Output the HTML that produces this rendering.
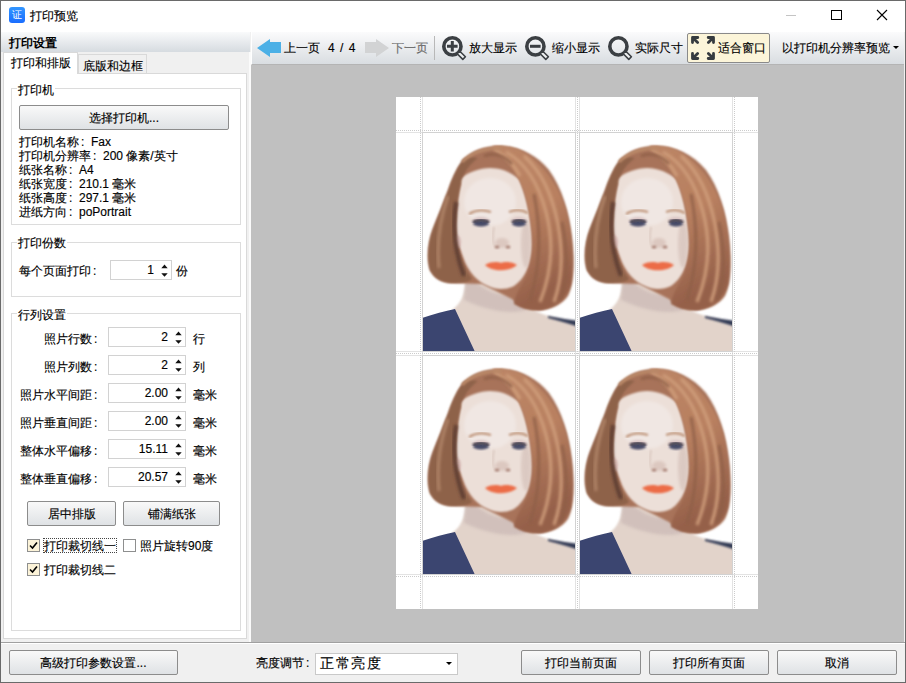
<!DOCTYPE html>
<html><head><meta charset="utf-8">
<style>
*{box-sizing:border-box;margin:0;padding:0}
html,body{width:906px;height:683px;overflow:hidden;background:#f0f0f0}
body{position:relative;font-family:"Liberation Sans",sans-serif;font-size:12px;color:#000;-webkit-text-stroke:0.15px #000}
.a{position:absolute}
.t{position:absolute;line-height:12px;white-space:nowrap}
.btn{position:absolute;border:1px solid #8c8c8c;border-radius:2px;background:linear-gradient(#f9f9f9,#dfe2e5);text-align:center;line-height:25px}
.grp{position:absolute;border:1px solid #dcdcdc}
.leg{position:absolute;background:#fff;padding:0 1px;line-height:12px}
.spin{position:absolute;border:1px solid #d2d2d2;background:#fff;height:20px}
.spin .v{position:absolute;right:17px;top:3px;line-height:12px;color:#000}
.spin .ar{position:absolute;right:3px;top:3px;width:7px;height:13px}
i.c{font-style:normal;display:inline-block;width:12px;padding-left:2px}
.cb{position:absolute;width:13px;height:13px;border:1px solid #8e8f8f;background:#fff}
.cb.on{background:#fcf3d8}
</style></head><body>
<!-- window frame -->
<div class="a" style="left:0;top:0;width:906px;height:683px;border:1px solid #6a6a6a;z-index:50;pointer-events:none"></div>
<!-- title bar -->
<div class="a" style="left:1px;top:1px;width:904px;height:31px;background:#fff"></div>
<div class="a" style="left:9px;top:7px;width:16px;height:16px;border-radius:3px;background:linear-gradient(#3296ff,#1a6dff)"></div>
<div class="t" style="left:12px;top:10px;font-size:10px;line-height:10px;color:#fff;-webkit-text-stroke:0">证</div>
<div class="t" style="left:30px;top:10px">打印预览</div>
<div class="a" style="left:786px;top:15px;width:10px;height:1px;background:#c4c4c4"></div>
<div class="a" style="left:831px;top:10px;width:11px;height:10px;border:1px solid #000"></div>
<svg class="a" style="left:876px;top:9px" width="12" height="12" viewBox="0 0 12 12"><path d="M1 1L11 11M11 1L1 11" stroke="#000" stroke-width="1.1"/></svg>

<!-- left panel header -->
<div class="a" style="left:1px;top:32px;width:249px;height:20px;background:linear-gradient(#f9fafb,#d6dbe0)"></div>
<div class="t" style="left:9px;top:37px;font-weight:bold;-webkit-text-stroke:0">打印设置</div>

<!-- tabs -->
<div class="a" style="left:78px;top:54px;width:69px;height:20px;background:#f0f0f0;border:1px solid #d9d9d9;border-bottom:none"></div>
<div class="t" style="left:83px;top:60px">底版和边框</div>
<div class="a" style="left:3px;top:73px;width:244px;height:566px;background:#fff;border:1px solid #d9d9d9"></div>
<div class="a" style="left:3px;top:52px;width:75px;height:22px;background:#fff;border:1px solid #d9d9d9;border-bottom:none"></div>
<div class="t" style="left:11px;top:57px">打印和排版</div>

<!-- group 1 -->
<div class="grp" style="left:11px;top:88px;width:230px;height:137px"></div>
<div class="leg t" style="left:17px;top:84px">打印机</div>
<div class="btn" style="left:19px;top:105px;width:210px;height:25px">选择打印机...</div>
<div class="t" style="left:19px;top:135px;line-height:14px">打印机名称<i class="c">:</i>Fax<br>打印机分辨率<i class="c">:</i>200 像素/英寸<br>纸张名称<i class="c">:</i>A4<br>纸张宽度<i class="c">:</i>210.1 毫米<br>纸张高度<i class="c">:</i>297.1 毫米<br>进纸方向<i class="c">:</i>poPortrait</div>

<!-- group 2 -->
<div class="grp" style="left:11px;top:242px;width:230px;height:55px"></div>
<div class="leg t" style="left:17px;top:237px">打印份数</div>
<div class="t" style="left:19px;top:265px">每个页面打印<i class="c">:</i></div>
<div class="spin" style="left:110px;top:260px;width:62px"><span class="v">1</span><svg class="ar" viewBox="0 0 7 13"><path d="M0.3 4.2L3.5 0.6L6.7 4.2ZM0.3 9.2L3.5 12.8L6.7 9.2Z" fill="#111"/></svg></div>
<div class="t" style="left:176px;top:265px">份</div>

<!-- group 3 -->
<div class="grp" style="left:11px;top:313px;width:230px;height:318px"></div>
<div class="leg t" style="left:17px;top:309px">行列设置</div>

<div class="t" style="left:44px;top:333px">照片行数<i class="c">:</i></div>
<div class="spin" style="left:108px;top:327px;width:78px"><span class="v">2</span><svg class="ar" viewBox="0 0 7 13"><path d="M0.3 4.2L3.5 0.6L6.7 4.2ZM0.3 9.2L3.5 12.8L6.7 9.2Z" fill="#111"/></svg></div>
<div class="t" style="left:193px;top:333px">行</div>

<div class="t" style="left:44px;top:361px">照片列数<i class="c">:</i></div>
<div class="spin" style="left:108px;top:355px;width:78px"><span class="v">2</span><svg class="ar" viewBox="0 0 7 13"><path d="M0.3 4.2L3.5 0.6L6.7 4.2ZM0.3 9.2L3.5 12.8L6.7 9.2Z" fill="#111"/></svg></div>
<div class="t" style="left:193px;top:361px">列</div>

<div class="t" style="left:20px;top:389px">照片水平间距<i class="c">:</i></div>
<div class="spin" style="left:108px;top:383px;width:78px"><span class="v">2.00</span><svg class="ar" viewBox="0 0 7 13"><path d="M0.3 4.2L3.5 0.6L6.7 4.2ZM0.3 9.2L3.5 12.8L6.7 9.2Z" fill="#111"/></svg></div>
<div class="t" style="left:193px;top:389px">毫米</div>

<div class="t" style="left:20px;top:417px">照片垂直间距<i class="c">:</i></div>
<div class="spin" style="left:108px;top:411px;width:78px"><span class="v">2.00</span><svg class="ar" viewBox="0 0 7 13"><path d="M0.3 4.2L3.5 0.6L6.7 4.2ZM0.3 9.2L3.5 12.8L6.7 9.2Z" fill="#111"/></svg></div>
<div class="t" style="left:193px;top:417px">毫米</div>

<div class="t" style="left:20px;top:445px">整体水平偏移<i class="c">:</i></div>
<div class="spin" style="left:108px;top:439px;width:78px"><span class="v">15.11</span><svg class="ar" viewBox="0 0 7 13"><path d="M0.3 4.2L3.5 0.6L6.7 4.2ZM0.3 9.2L3.5 12.8L6.7 9.2Z" fill="#111"/></svg></div>
<div class="t" style="left:193px;top:445px">毫米</div>

<div class="t" style="left:20px;top:473px">整体垂直偏移<i class="c">:</i></div>
<div class="spin" style="left:108px;top:467px;width:78px"><span class="v">20.57</span><svg class="ar" viewBox="0 0 7 13"><path d="M0.3 4.2L3.5 0.6L6.7 4.2ZM0.3 9.2L3.5 12.8L6.7 9.2Z" fill="#111"/></svg></div>
<div class="t" style="left:193px;top:473px">毫米</div>

<div class="btn" style="left:27px;top:501px;width:89px;height:25px">居中排版</div>
<div class="btn" style="left:123px;top:501px;width:97px;height:25px">铺满纸张</div>

<div class="cb on" style="left:27px;top:539px"></div>
<svg class="a" style="left:29px;top:541px" width="9" height="9" viewBox="0 0 9 9"><path d="M1 4.5L3.5 7L8 1.5" stroke="#000" stroke-width="1.6" fill="none"/></svg>
<div class="a" style="left:43px;top:538px;width:74px;height:15px;border:1px dotted #444"></div>
<div class="t" style="left:44px;top:540px">打印裁切线一</div>
<div class="cb" style="left:123px;top:539px"></div>
<div class="t" style="left:140px;top:540px">照片旋转90度</div>
<div class="cb on" style="left:27px;top:563px"></div>
<svg class="a" style="left:29px;top:565px" width="9" height="9" viewBox="0 0 9 9"><path d="M1 4.5L3.5 7L8 1.5" stroke="#000" stroke-width="1.6" fill="none"/></svg>
<div class="t" style="left:44px;top:564px">打印裁切线二</div>

<!-- toolbar -->
<div class="a" style="left:251px;top:32px;width:653px;height:33px;background:linear-gradient(#fbfbfc,#d9dde1);border-left:1px solid #fff;border-bottom:1px solid #b4b4b4"></div>
<svg class="a" style="left:257px;top:39px" width="24" height="18" viewBox="0 0 24 18"><path d="M0 9L13 0V3H24V14H13V18Z" fill="#4cb0e6"/></svg>
<div class="t" style="left:284px;top:42px">上一页</div>
<div class="t" style="left:328px;top:42px;word-spacing:1px;letter-spacing:0.5px">4 / 4</div>
<svg class="a" style="left:365px;top:39px" width="24" height="18" viewBox="0 0 24 18"><path d="M24 9L11 0V3H0V14H11V18Z" fill="#d2d3d4"/></svg>
<div class="t" style="left:392px;top:42px;color:#8a8a8a">下一页</div>
<div class="a" style="left:434px;top:36px;width:1px;height:24px;background:#b8b8b8"></div>

<svg class="a" style="left:441px;top:35px" width="26" height="26" viewBox="0 0 26 26"><circle cx="11.4" cy="11.4" r="8.6" stroke="#3b3f43" stroke-width="3.6" fill="none"/><path d="M18.8 16.2L24.4 21.8L21.8 24.4L16.2 18.8Z" stroke="#3b3f43" stroke-width="1.6" stroke-linejoin="round" fill="#eef0f1"/><path d="M6 11.3H16.6M11.3 6V16.6" stroke="#3b3f43" stroke-width="3"/></svg>
<div class="t" style="left:469px;top:42px">放大显示</div>
<svg class="a" style="left:524px;top:35px" width="26" height="26" viewBox="0 0 26 26"><circle cx="11.4" cy="11.4" r="8.6" stroke="#3b3f43" stroke-width="3.6" fill="none"/><path d="M18.8 16.2L24.4 21.8L21.8 24.4L16.2 18.8Z" stroke="#3b3f43" stroke-width="1.6" stroke-linejoin="round" fill="#eef0f1"/><path d="M6 11.3H16.6" stroke="#3b3f43" stroke-width="3"/></svg>
<div class="t" style="left:552px;top:42px">缩小显示</div>
<svg class="a" style="left:607px;top:35px" width="26" height="26" viewBox="0 0 26 26"><circle cx="11.4" cy="11.4" r="8.6" stroke="#3b3f43" stroke-width="3.6" fill="none"/><path d="M18.8 16.2L24.4 21.8L21.8 24.4L16.2 18.8Z" stroke="#3b3f43" stroke-width="1.6" stroke-linejoin="round" fill="#eef0f1"/></svg>
<div class="t" style="left:635px;top:42px">实际尺寸</div>

<div class="a" style="left:687px;top:33px;width:83px;height:30px;background:#fcf5d9;border:1px solid #8a8a8a;border-radius:2px"></div>
<svg class="a" style="left:691px;top:36px" width="24" height="24" viewBox="0 0 24 24"><g stroke="#363b3f" stroke-width="2.8" stroke-linecap="round" stroke-linejoin="round" fill="none"><path d="M1.5 6.6V1.5H6.8M1.8 1.8L6.6 6.6"/><path d="M17.2 1.5H22.5V6.6M22.2 1.8L17.4 6.6"/><path d="M1.5 17.4V22.5H6.8M1.8 22.2L6.6 17.4"/><path d="M17.2 22.5H22.5V17.4M22.2 22.2L17.4 17.4"/></g></svg>
<div class="t" style="left:718px;top:42px">适合窗口</div>
<div class="t" style="left:782px;top:42px">以打印机分辨率预览</div>
<svg class="a" style="left:893px;top:46px" width="6" height="4" viewBox="0 0 6 4"><path d="M0 0H6L3 3Z" fill="#000"/></svg>

<!-- preview area -->
<div class="a" style="left:249px;top:52px;width:2px;height:590px;background:#fbfbfb"></div>
<div class="a" style="left:251px;top:65px;width:653px;height:577px;background:#c0c0c0"></div>
<div class="a" style="left:904px;top:32px;width:1px;height:610px;background:#f0f0f0"></div>
<div class="a" style="left:396px;top:97px;width:362px;height:512px;background:#fff"></div>

<svg class="a" style="left:396px;top:97px" width="362" height="512" viewBox="0 0 362 512">
<defs>
<filter id="bl" x="-20%" y="-20%" width="140%" height="140%"><feGaussianBlur stdDeviation="1.6"/></filter>
<filter id="bl2" x="-20%" y="-20%" width="140%" height="140%"><feGaussianBlur stdDeviation="0.8"/></filter>
<linearGradient id="hg" x1="0" y1="0" x2="0.3" y2="1"><stop offset="0" stop-color="#bb8566"/><stop offset="0.5" stop-color="#b98060"/><stop offset="1" stop-color="#95604a"/></linearGradient>
<clipPath id="pc"><rect x="0" y="0" width="154" height="220"/></clipPath>
<g id="ph" clip-path="url(#pc)">
<rect x="0" y="0" width="154" height="220" fill="#fff"/>
<!-- neck/chest -->
<path d="M44 134C45 155 42 170 30 178L52 221H156V191C140 188 128 185 118 181C108 178 102 165 100 146Z" fill="#e2d3ca" filter="url(#bl2)"/>
<path d="M44 140C60 160 84 170 102 158L104 178C84 184 60 176 42 168Z" fill="#cdbcb8" opacity=".8" filter="url(#bl)"/>
<!-- shirt -->
<path d="M-3 187C10 183 22 179 33 177L54 222H-3Z" fill="#3b4570"/>
<path d="M126 184C138 186 148 188 157 189V195C148 192 138 189 126 186Z" fill="#333a55" filter="url(#bl2)"/>
<!-- hair silhouette -->
<path d="M76 14C96 14 114 22 127 38C140 56 147 80 150 105C153 130 152 152 146 164C139 174 126 179 113 178C103 177 96 173 90 167L60 152L30 151C20 151 12 146 8 138C4 126 6 110 11 97C16 84 22 70 27 56C31 44 36 34 42 27C50 19 62 14 76 14Z" fill="#a8735a" filter="url(#bl2)"/>
<!-- face -->
<path d="M38 47C46 40 58 36 68 36C80 36 90 41 97 47C104 62 110 90 110 112C110 130 104 146 92 154C84 158 74 158 66 154C56 150 46 140 41 125C36 112 33 102 34 90C34 75 36 62 39 52Z" fill="#ecdfd8" filter="url(#bl2)"/>
<ellipse cx="35" cy="110" rx="4" ry="7" fill="#d8bab6" filter="url(#bl2)"/>
<ellipse cx="68" cy="70" rx="26" ry="24" fill="#f0e7e3" filter="url(#bl)"/>
<ellipse cx="104" cy="112" rx="5" ry="24" fill="#c4aaa2" opacity=".4" filter="url(#bl)"/>
<!-- left hair -->
<path d="M42 27C36 34 31 44 27 56C22 70 16 84 11 97C6 110 5 126 8 138C12 146 20 151 30 151C40 151 47 150 50 147C42 136 37 122 34 108C33 92 35 70 39 50C42 40 48 32 56 26C50 25 46 25 42 27Z" fill="#8e624a" filter="url(#bl2)"/>
<path d="M34 70C31 90 31 115 42 144" stroke="#5e3e32" stroke-width="4" fill="none" filter="url(#bl)"/>
<path d="M26 64C19 84 14 108 17 136" stroke="#b08468" stroke-width="3" fill="none" filter="url(#bl)"/>
<!-- right hair -->
<path d="M96 46C104 60 108 80 110 100C112 120 108 140 100 152C95 160 92 168 92 172C100 177 110 179 120 178C134 175 145 166 149 152C152 132 150 100 144 78C136 52 120 30 98 18C90 14 80 13 70 14C82 24 90 34 96 46Z" fill="url(#hg)" filter="url(#bl2)"/>
<path d="M84 20C102 30 116 50 124 80C132 110 130 140 118 170M102 24C118 38 130 62 136 92C141 120 140 148 132 170M72 17C82 23 92 32 98 44" stroke="#cf9d7a" stroke-width="3" fill="none" filter="url(#bl)"/>
<path d="M62 24C72 20 82 24 90 32M112 62C118 92 120 130 108 168M140 90C146 120 146 150 138 168" stroke="#8e5e46" stroke-width="2.5" fill="none" filter="url(#bl)"/>
<path d="M40 30C50 20 65 16 80 16" stroke="#b98868" stroke-width="3" fill="none" filter="url(#bl2)"/>
<!-- brows -->
<path d="M47 82Q57 76 69 80M87 80Q97 76 106 81" stroke="#bf957a" stroke-width="2.2" fill="none" filter="url(#bl2)"/>
<!-- eye shadows -->
<ellipse cx="59" cy="89" rx="9" ry="4" fill="#d9c4c4" filter="url(#bl2)"/>
<ellipse cx="97" cy="89" rx="8" ry="4" fill="#d9c4c4" filter="url(#bl2)"/>
<!-- eyes -->
<ellipse cx="59" cy="91.5" rx="8" ry="3" fill="#474b68" filter="url(#bl2)"/><path d="M51 90Q59 86 67 90" stroke="#2a2836" stroke-width="2" fill="none" filter="url(#bl2)"/>
<ellipse cx="97" cy="91.5" rx="7" ry="3" fill="#474b68" filter="url(#bl2)"/><path d="M90 90Q97 86 104 90" stroke="#2a2836" stroke-width="2" fill="none" filter="url(#bl2)"/>
<!-- nose -->
<path d="M72 95C70 105 70 110 73 114" stroke="#dccac2" stroke-width="2" fill="none" filter="url(#bl2)"/>
<ellipse cx="80" cy="111" rx="7" ry="5" fill="#dcc8c0" filter="url(#bl)"/><ellipse cx="75" cy="115" rx="2.5" ry="1.5" fill="#a98276" filter="url(#bl2)"/>
<ellipse cx="86" cy="115" rx="2.5" ry="1.5" fill="#a98276" filter="url(#bl2)"/>
<!-- lips -->
<path d="M63 133C70 129 76 130 79 131C82 130 88 129 95 133C88 140 70 140 63 133Z" fill="#ec6c46" filter="url(#bl2)"/>
</g>
</defs>
<!-- cut lines -->
<g stroke="#e3e3e3" stroke-width="1" fill="none">
<path d="M26.5 0V512M179.5 0V512M183.5 0V512M336.5 0V512M0 35.5H362M0 254.5H362M0 258.5H362M0 477.5H362"/>
</g>
<g stroke="#cccccc" stroke-width="1" stroke-dasharray="1 1" fill="none">
<path d="M24.5 0V512M181.5 0V512M338.5 0V512M0 33.5H362M0 256.5H362M0 479.5H362"/>
</g>
<use href="#ph" x="26" y="35"/>
<use href="#ph" x="183" y="35"/>
<use href="#ph" x="26" y="258"/>
<use href="#ph" x="183" y="258"/>
<g stroke="#d2d2d2" fill="none">
<rect x="26.5" y="35.5" width="153" height="219"/>
<rect x="183.5" y="35.5" width="153" height="219"/>
<rect x="26.5" y="258.5" width="153" height="219"/>
<rect x="183.5" y="258.5" width="153" height="219"/>
</g>
</svg>

<!-- bottom bar -->
<div class="a" style="left:1px;top:642px;width:904px;height:1px;background:#a0a0a0"></div>
<div class="a" style="left:1px;top:643px;width:904px;height:1px;background:#fff"></div>
<div class="btn" style="left:9px;top:650px;width:169px;height:25px">高级打印参数设置...</div>
<div class="t" style="left:256px;top:657px">亮度调节<i class="c">:</i></div>
<div class="a" style="left:315px;top:653px;width:143px;height:22px;background:#fff;border:1px solid #c9c9c9"></div>
<div class="t" style="left:320px;top:656px;font-size:14px;line-height:14px;letter-spacing:1.5px">正常亮度</div>
<svg class="a" style="left:446px;top:662px" width="6" height="4" viewBox="0 0 6 4"><path d="M0 0H6L3 3Z" fill="#000"/></svg>
<div class="btn" style="left:521px;top:650px;width:120px;height:25px">打印当前页面</div>
<div class="btn" style="left:649px;top:650px;width:120px;height:25px">打印所有页面</div>
<div class="btn" style="left:777px;top:650px;width:120px;height:25px">取消</div>
</body></html>
